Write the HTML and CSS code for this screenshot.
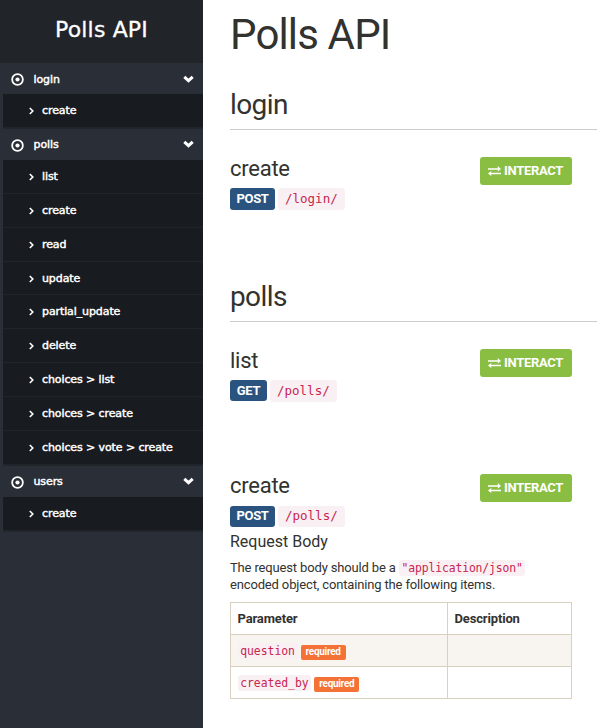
FILE: index.html
```html
<!DOCTYPE html>
<html lang="en">
<head>
<meta charset="utf-8">
<title>Polls API</title>
<link rel="stylesheet" href="styles.css">
</head>
<body>
<svg class="defs" width="0" height="0" aria-hidden="true">
  <symbol id="target" viewBox="0 0 13 13"><circle cx="6.5" cy="6.5" r="5.35" fill="none" stroke="currentColor" stroke-width="1.8"/><circle cx="6.5" cy="6.5" r="2.1" fill="currentColor"/></symbol>
  <symbol id="down" viewBox="0 0 11 8"><path d="M1.3 1.8 5.5 5.7 9.7 1.8" fill="none" stroke="currentColor" stroke-width="3"/></symbol>
  <symbol id="right" viewBox="0 0 5 8"><path d="M.8 1 3.8 4 .8 7" fill="none" stroke="currentColor" stroke-width="1.6"/></symbol>
  <symbol id="exchange" viewBox="0 0 13 10"><path d="M0 3H11M2 7.5H13" fill="none" stroke="currentColor" stroke-width="1.5"/><path d="M9.8 0 13 3 9.8 5.4ZM3.2 5 0 7.5 3.2 10Z" fill="currentColor"/></symbol>
</svg>
<div class="page">
  <aside class="sidebar">
    <div class="brand">Polls API</div>
    <nav>
      <div class="group"><svg class="target"><use href="#target"/></svg><span>login</span><svg class="down"><use href="#down"/></svg></div>
      <ul class="items">
        <li><svg><use href="#right"/></svg><span>create</span></li>
      </ul>
      <div class="group"><svg class="target"><use href="#target"/></svg><span>polls</span><svg class="down"><use href="#down"/></svg></div>
      <ul class="items">
        <li><svg><use href="#right"/></svg><span>list</span></li>
        <li><svg><use href="#right"/></svg><span>create</span></li>
        <li><svg><use href="#right"/></svg><span>read</span></li>
        <li><svg><use href="#right"/></svg><span>update</span></li>
        <li><svg><use href="#right"/></svg><span>partial_update</span></li>
        <li><svg><use href="#right"/></svg><span>delete</span></li>
        <li><svg><use href="#right"/></svg><span>choices &gt; list</span></li>
        <li><svg><use href="#right"/></svg><span>choices &gt; create</span></li>
        <li><svg><use href="#right"/></svg><span>choices &gt; vote &gt; create</span></li>
      </ul>
      <div class="group"><svg class="target"><use href="#target"/></svg><span>users</span><svg class="down"><use href="#down"/></svg></div>
      <ul class="items">
        <li><svg><use href="#right"/></svg><span>create</span></li>
      </ul>
    </nav>
  </aside>
  <main class="content">
    <h1>Polls API</h1>
    <h2>login</h2>
    <section class="endpoint">
      <div class="head"><h3>create</h3><button class="interact"><svg><use href="#exchange"/></svg><span>INTERACT</span></button></div>
      <div class="route"><span class="method post">POST</span><code>/login/</code></div>
    </section>
    <h2 class="next">polls</h2>
    <section class="endpoint">
      <div class="head"><h3>list</h3><button class="interact"><svg><use href="#exchange"/></svg><span>INTERACT</span></button></div>
      <div class="route"><span class="method get">GET</span><code>/polls/</code></div>
    </section>
    <section class="endpoint following">
      <div class="head"><h3>create</h3><button class="interact"><svg><use href="#exchange"/></svg><span>INTERACT</span></button></div>
      <div class="route"><span class="method post">POST</span><code>/polls/</code></div>
      <h4>Request Body</h4>
      <p>The request body should be a <code>"application/json"</code><br>encoded object, containing the following items.</p>
      <table>
        <thead><tr><th class="param">Parameter</th><th>Description</th></tr></thead>
        <tbody>
          <tr class="odd"><td><div class="cell"><code>question</code><span class="required">required</span></div></td><td></td></tr>
          <tr><td><div class="cell"><code>created_by</code><span class="required">required</span></div></td><td></td></tr>
        </tbody>
      </table>
    </section>
  </main>
</div>
</body>
</html>
```
FILE: styles.css
```css
* { box-sizing: border-box; }
body { margin: 0; background: #fff; color: #32322f; font: 13px/17px Roboto, sans-serif; }
h1, h2, h3, h4, p, ul { margin: 0; padding: 0; }
svg { flex: none; }
.defs { position: absolute; }
.page { display: flex; height: 728px; overflow: hidden; }

.sidebar { width: 203px; flex: none; background: #2a2e37; color: #fff; font-family: "DejaVu Sans", sans-serif; font-size: 11px; letter-spacing: -.1px; }
.brand { height: 63px; padding-top: 1px; background: #212529; font-size: 22px; line-height: 58px; text-align: center; letter-spacing: .15px; -webkit-text-stroke: .3px #fff; }
.group { display: flex; align-items: center; height: 31px; padding: 1px 9px 0 11px; -webkit-text-stroke: .45px #fff; }
.group .target { width: 13px; height: 13px; margin: 1px 9.5px 0 0; }
.group .down { width: 11px; height: 8px; margin: 0 0 1px auto; }
.items { margin-left: 3px; list-style: none; background: #181b1f; border-bottom: 1px solid #22262c; }
.items li { display: flex; align-items: center; height: 33.9px; padding: 0 0 0 26px; border-bottom: 1px solid #21252a; -webkit-text-stroke: .45px #fff; }
.items li svg { width: 5px; height: 8px; margin: 1px 8px 0 0; }

.content { width: 394px; flex: none; padding: 10px 0 0 27px; }
h1 { font-size: 42px; line-height: 50px; font-weight: 400; letter-spacing: -.85px; }
h2 { height: 42px; margin-top: 28px; border-bottom: 1px solid #ccc; font-size: 28px; line-height: 34px; font-weight: 400; letter-spacing: -.6px; }
h2.next { margin-top: 70px; }
.endpoint { width: 342px; margin-top: 27px; }
.endpoint.following { margin-top: 72px; }
.head { display: flex; justify-content: space-between; height: 28px; }
h3 { font-size: 22px; line-height: 24px; font-weight: 400; letter-spacing: -.25px; }
.interact { display: flex; align-items: center; gap: 3px; width: 92px; height: 28px; padding: 0 0 0 8px; border: 0; border-radius: 3px; background: #8abe43; color: #fff; font: 700 13px/20px Roboto, sans-serif; letter-spacing: -.3px; }
.interact svg { width: 13px; height: 10px; }
.route { display: flex; gap: 3px; height: 22px; margin-top: 3px; }
.following .route { margin-top: 4px; }
.method { height: 22px; border-radius: 3px; background: #2a547f; color: #fff; font-size: 13px; line-height: 21px; font-weight: 700; letter-spacing: -.35px; text-align: center; }
.post { width: 45px; }
.get { width: 37px; height: 21px; }
.get + code { height: 21px; }
.following .method, .following .route code { height: 21px; line-height: 20px; }
code { padding: 1px 2.7px; border-radius: 3px; background: #f9f0f4; color: #c7254e; font: 11.4px/14px "DejaVu Sans Mono", monospace; letter-spacing: -.02px; }
.route code { height: 22px; padding: 0 7px; font-size: 12.5px; line-height: 21px; letter-spacing: 0; }
h4 { margin-top: 4px; font-size: 16px; line-height: 20px; font-weight: 400; }
p { margin-top: 7px; letter-spacing: -.15px; }
table { width: 342px; margin-top: 9px; border-collapse: collapse; table-layout: fixed; }
th, td { height: 32px; padding: 0 6.5px; border: 1px solid #d9d0c0; text-align: left; vertical-align: middle; }
th { font-weight: 700; letter-spacing: -.15px; }
.param { width: 217px; }
.odd { background: #f8f4f0; }
.cell { display: flex; align-items: center; gap: 3px; }
.required { height: 15px; margin-top: 3px; padding: 0 5px; border-radius: 2px; background: #f47235; color: #fff; font-size: 10px; line-height: 14px; font-weight: 700; letter-spacing: -.3px; }
p code { letter-spacing: -.12px; }
```
